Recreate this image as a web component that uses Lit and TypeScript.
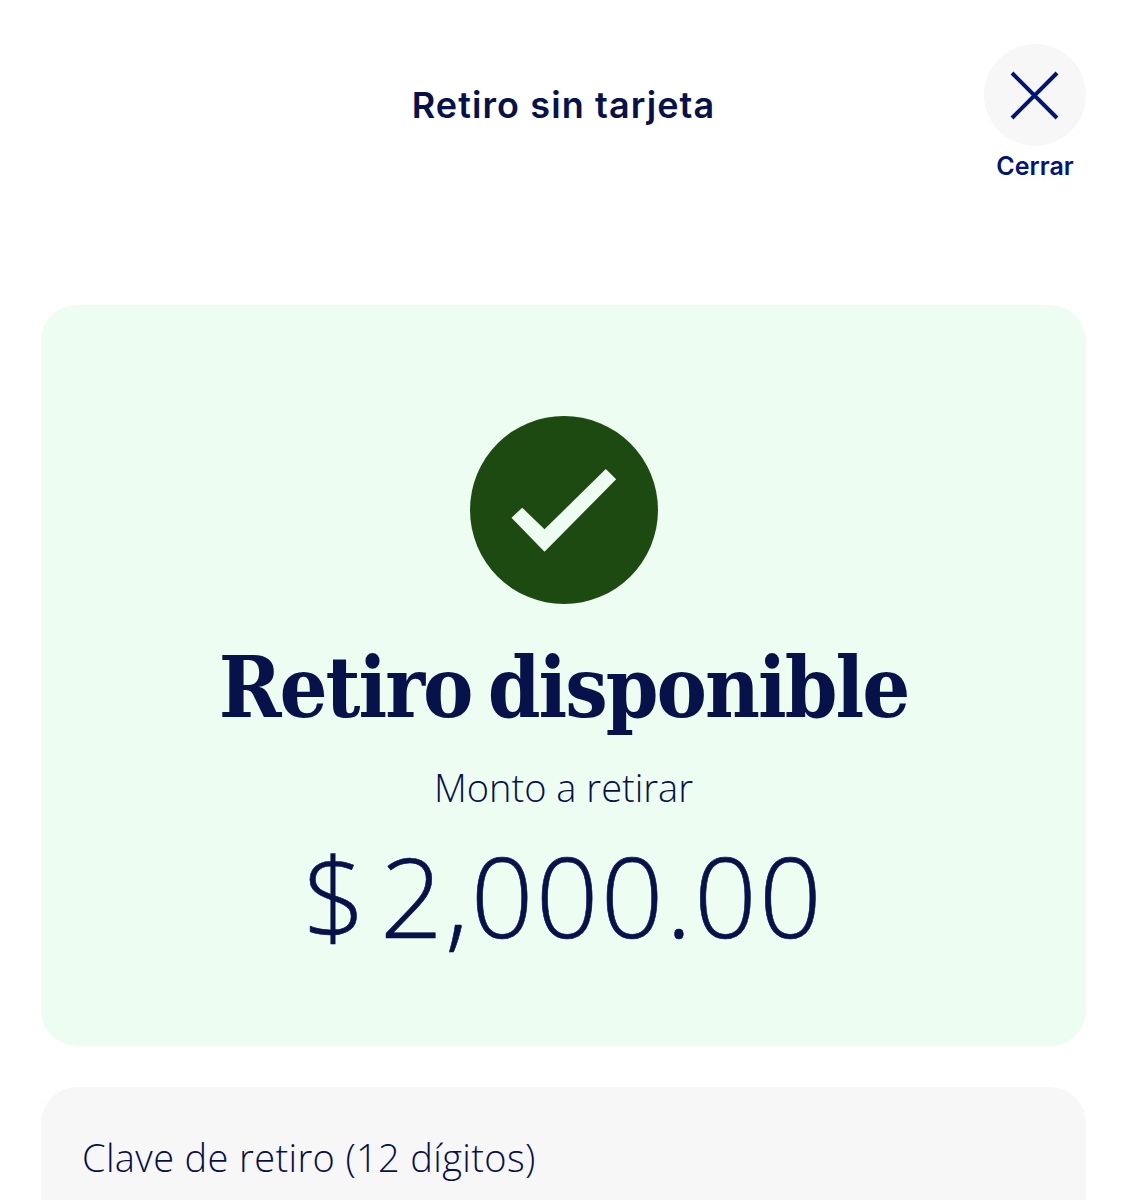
import {LitElement, html, css} from 'lit';
import {customElement} from 'lit/decorators.js';

@customElement('app-root')
export class AppRoot extends LitElement {
  static styles = css`
    :host {
      display: block;
      height: 1200px;
      overflow: hidden;
      background: #fff;
      color: #07114a;
      font-family: "Open Sans", "Liberation Sans", sans-serif;
    }
    .page {
      padding: 44px 41px 0;
    }
    .header {
      display: grid;
      grid-template-columns: 1fr auto 1fr;
      height: 261px;
    }
    .title {
      grid-column: 2;
      margin: 38px 0 0;
      font-family: "Inter", sans-serif;
      font-size: 36px;
      line-height: 46px;
      font-weight: 600;
      letter-spacing: 1.1px;
      white-space: nowrap;
    }
    .close {
      grid-column: 3;
      justify-self: end;
      display: flex;
      flex-direction: column;
      align-items: center;
      width: 102px;
      color: #00147a;
    }
    .close-circle {
      display: block;
      width: 102px;
      height: 102px;
      flex: none;
    }
    .close-label {
      margin-top: 4px;
      font-family: "Inter", sans-serif;
      font-size: 25px;
      line-height: 32px;
      font-weight: 600;
    }
    .status {
      display: flex;
      flex-direction: column;
      align-items: center;
      height: 741px;
      padding-top: 111px;
      box-sizing: border-box;
      border-radius: 36px;
      background: #eefdf1;
    }
    .check {
      display: block;
      width: 188px;
      height: 188px;
      flex: none;
    }
    h1 {
      margin: 29px 0 0;
      font-family: "DejaVu Serif Condensed", "DejaVu Serif", serif;
      font-size: 84px;
      line-height: 110px;
      font-weight: 700;
      letter-spacing: -2px;
      word-spacing: -8px;
      white-space: nowrap;
    }
    .label {
      margin-top: 19px;
      font-size: 38px;
      line-height: 50px;
      font-weight: 300;
    }
    .amount {
      margin-top: 18px;
      font-size: 110px;
      line-height: 130px;
      font-weight: 300;
      letter-spacing: 2.2px;
      -webkit-text-stroke: 0.6px currentColor;
      white-space: nowrap;
    }
    .currency {
      margin-right: 12px;
    }
    .code {
      margin-top: 41px;
      height: 200px;
      padding: 45px 41px;
      box-sizing: border-box;
      border-radius: 36px;
      background: #f7f7f7;
      font-size: 38px;
      line-height: 50px;
      font-weight: 300;
      letter-spacing: 0.35px;
    }
  `;

  render() {
    return html`
      <div class="page">
        <div class="header">
          <h2 class="title">Retiro sin tarjeta</h2>
          <div class="close">
            <svg class="close-circle" viewBox="0 0 102 102">
              <circle cx="51" cy="51" r="51" fill="#f7f7f7"></circle>
              <path d="M28 29 L73 74 M73 29 L28 74" fill="none" stroke="currentColor" stroke-width="4"></path>
            </svg>
            <span class="close-label">Cerrar</span>
          </div>
        </div>
        <div class="status">
          <svg class="check" viewBox="0 0 188 188">
            <circle cx="94" cy="94" r="94" fill="#1c4a10"></circle>
            <path d="M41.500 101.700 L52.200 91.700 L74.500 113.300 L135.800 53 L146.200 63.300 L74.500 135.700 Z" fill="#eefdf1"></path>
          </svg>
          <h1>Retiro disponible</h1>
          <div class="label">Monto a retirar</div>
          <div class="amount"><span class="currency">$</span>2,000.00</div>
        </div>
        <div class="code">Clave de retiro (12 dígitos)</div>
      </div>
    `;
  }
}
